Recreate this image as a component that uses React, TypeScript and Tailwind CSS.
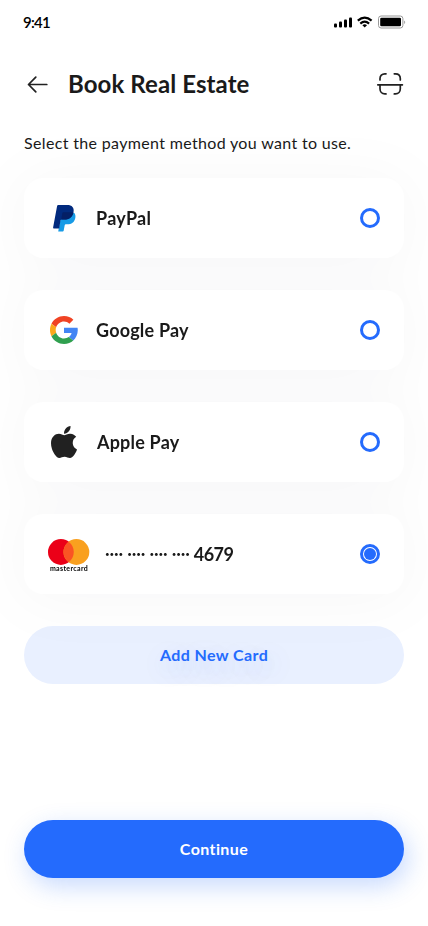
import { useState } from 'react';
import type { ReactNode } from 'react';

function StatusIcons() {
  return (
    <svg className="h-[14px] w-[73px]" viewBox="333 15.5 73 14" fill="none">
      <g fill="#000">
        <rect x="334" y="24" width="3" height="4" rx="1" />
        <rect x="339" y="22" width="3" height="6" rx="1" />
        <rect x="344" y="20" width="3" height="8" rx="1" />
        <rect x="349" y="18" width="3" height="10" rx="1" />
      </g>
      <path d="M357.8 21.1Q364.7 15.1 371.6 21.1M360.3 24.1Q364.7 20.3 369.1 24.1" stroke="#000" strokeWidth="2.2" />
      <path d="M362.4 25.7q2.3-1.7 4.6 0l-2.3 2.4z" fill="#000" />
      <rect x="378.5" y="16.5" width="24.4" height="12" rx="2.6" stroke="#999" />
      <rect x="380.2" y="18.2" width="20.8" height="8.6" rx="1.3" fill="#000" />
      <path d="M404.2 21v3.6q1-.6 1-1.8t-1-1.8z" fill="#999" />
    </svg>
  );
}

function PayPalIcon() {
  return (
    <svg className="ml-[5px] h-[27px] w-[23px]" viewBox="0 0 23 27">
      <path d="M8.7 8h12.6c1.1 1.2 1.4 2.9 1 4.9-.9 4.3-3.8 6.4-8 6.4h-1.5c-.6 0-1 .4-1.1 1l-1 5.1c-.1.6-.6 1-1.2 1H5.2z" fill="#179be6" />
      <path d="M4.1 1.1C4.2.5 4.7 0 5.4 0h8.8c4.8 0 7.3 2.7 6.3 7.2-1 5-4.2 7.4-9.1 7.4H8.8c-.7 0-1.2.5-1.4 1.2l-1.2 7.6H.8c-.5 0-.8-.4-.7-.9z" fill="#012a7e" />
      <path d="M9.3 8.3c.1-.8.6-1.1 1.2-1.1h6.9c1.1 0 2.1.1 3 .4-1.1 4.7-4.2 7-9 7H8.3z" fill="#041f66" />
    </svg>
  );
}

function GoogleIcon() {
  return (
    <svg className="ml-[2px] h-7 w-7" viewBox="0 0 48 48">
      <path fill="#f04324" d="M24 9.5c3.54 0 6.71 1.22 9.21 3.6l6.85-6.85C35.9 2.38 30.47 0 24 0 14.62 0 6.51 5.38 2.56 13.22l7.98 6.19C12.43 13.72 17.74 9.5 24 9.5z" />
      <path fill="#4285f4" d="M47.6 24.55c0-1.57-.15-3.09-.38-4.55H24v9.02h12.94c-.58 2.96-2.26 5.48-4.78 7.18l7.73 6c4.51-4.18 7.71-10.36 7.71-17.65z" />
      <path fill="#fba81b" d="M10.53 28.59c-.48-1.45-.76-2.99-.76-4.59s.27-3.14.76-4.59l-7.98-6.19C.92 16.46 0 20.12 0 24s.92 7.54 2.56 10.78l7.97-6.19z" />
      <path fill="#30a04f" d="M24 48c6.48 0 11.93-2.13 15.89-5.81l-7.73-6c-2.15 1.45-4.92 2.3-8.16 2.3-6.26 0-11.57-4.22-13.47-9.91l-7.98 6.19C6.51 42.62 14.62 48 24 48z" />
    </svg>
  );
}

function AppleIcon() {
  return (
    <svg className="ml-[3px] h-8 w-[26px]" viewBox="4 32 376 448" preserveAspectRatio="none">
      <path fill="#212121" d="M318.7 268.7c-.2-36.7 16.4-64.4 50-84.8-18.8-26.9-47.2-41.7-84.7-44.6-35.5-2.8-74.3 20.7-88.5 20.7-15 0-49.4-19.7-76.4-19.7C63.3 141.2 4 184.8 4 273.5q0 39.3 14.4 81.2c12.8 36.7 59 126.7 107.2 125.2 25.2-.6 43-17.9 75.8-17.9 31.8 0 48.3 17.9 76.4 17.9 48.6-.7 90.4-82.5 102.6-119.3-65.2-30.7-61.7-90-61.7-91.9zm-56.6-164.2c27.3-32.4 24.8-61.9 24-72.5-24.1 1.4-52 16.4-67.9 34.9-17.5 19.8-27.8 44.3-25.6 71.9 26.1 2 49.9-11.4 69.5-34.3z" />
    </svg>
  );
}

function MastercardIcon() {
  return (
    <div className="flex w-[42px] flex-col items-center">
      <svg className="h-[26px] w-[42px]" viewBox="0 0 42 26">
        <circle cx="12.9" cy="13" r="12.9" fill="#eb0018" />
        <circle cx="28.4" cy="13" r="12.9" fill="#f9a01f" />
        <path d="M20.65 2.7a12.9 12.9 0 0 1 0 20.6 12.9 12.9 0 0 1 0-20.6z" fill="#fa5424" />
      </svg>
      <span className="-mt-px font-[Lato,sans-serif] text-[7px] leading-[8px] font-bold tracking-[0.35px] text-black">mastercard</span>
    </div>
  );
}

const methods: { id: string; icon: ReactNode; label: string; labelClass: string }[] = [
  { id: 'paypal', icon: <PayPalIcon />, label: 'PayPal', labelClass: 'tracking-[0.3px]' },
  { id: 'google', icon: <GoogleIcon />, label: 'Google Pay', labelClass: 'tracking-[0.2px]' },
  { id: 'apple', icon: <AppleIcon />, label: 'Apple Pay', labelClass: 'ml-px tracking-[0.2px]' },
  { id: 'card', icon: <MastercardIcon />, label: '4679', labelClass: 'tracking-[-0.5px]' },
];

export default function App() {
  const [selected, setSelected] = useState('card');

  return (
    <div className="mx-auto flex h-[926px] w-[428px] flex-col overflow-hidden bg-white font-[Lato,sans-serif] text-[#1a1a1a]">
      <div className="flex h-11 shrink-0 items-center justify-between pr-[22px] pl-[23px]">
        <span className="text-[15px] font-semibold tracking-[-0.75px] text-black">9:41</span>
        <StatusIcons />
      </div>

      <header className="flex h-20 shrink-0 items-center px-6">
        <button aria-label="Back">
          <svg className="h-7 w-7" viewBox="0 0 28 28" fill="none" stroke="#212121" strokeWidth="1.7" strokeLinecap="round" strokeLinejoin="round">
            <path d="M22.8 14.5H4.5M11.8 7.2l-7.3 7.3 7.3 7.3" />
          </svg>
        </button>
        <h1 className="ml-4 text-2xl font-bold tracking-[0.09px] whitespace-nowrap">Book Real Estate</h1>
        <button aria-label="Scan" className="ml-auto">
          <svg className="h-7 w-7" viewBox="0 0 28 28" fill="none" stroke="#212121" strokeWidth="1.7" strokeLinecap="round">
            <path d="M1.8 14.8h24.6M4 10V8.6C4 5.6 6 3.8 8.8 3.8H10M18.3 3.8h1.2c2.8 0 4.8 1.8 4.8 4.8V10M4 15v3.7c0 3 2 5.2 4.8 5.2H10M18.3 23.9h1.2c2.8 0 4.8-2.2 4.8-5.2V15" />
          </svg>
        </button>
      </header>

      <p className="mt-[7px] h-[47px] shrink-0 px-6 text-base leading-6 tracking-[0.34px] whitespace-nowrap">
        Select the payment method you want to use.
      </p>

      <div className="flex shrink-0 flex-col gap-8 px-6 drop-shadow-[0_4px_30px_rgba(4,6,15,0.035)]">
        {methods.map(method => (
          <button
            key={method.id}
            onClick={() => setSelected(method.id)}
            className="flex h-20 w-full items-center rounded-[20px] bg-white px-6 text-left"
          >
            <span className={method.id === 'card' ? 'mt-[2px] w-[57px]' : 'w-12'}>{method.icon}</span>
            {method.id === 'card' && (
              <span className="mr-1 text-[8px] tracking-[-0.15px] [word-spacing:2.4px] whitespace-pre">•••• •••• •••• ••••</span>
            )}
            <span className={`text-lg font-bold ${method.labelClass}`}>{method.label}</span>
            <span className="ml-auto flex h-5 w-5 items-center justify-center rounded-full border-[3px] border-[#246bfd]">
              {selected === method.id && <span className="h-3 w-3 rounded-full bg-[#246bfd]" />}
            </span>
          </button>
        ))}
      </div>

      <button className="mx-6 mt-8 h-[58px] shrink-0 rounded-full bg-[#e9f0ff] text-base font-bold tracking-[0.4px] text-[#246bfd] [text-shadow:4px_8px_24px_rgba(36,107,253,0.25)]">
        Add New Card
      </button>

      <button className="mx-6 mt-auto mb-12 h-[58px] shrink-0 rounded-full bg-[#246bfd] text-base font-bold tracking-[0.4px] text-white shadow-[4px_8px_24px_rgba(36,107,253,0.25)]">
        Continue
      </button>
    </div>
  );
}
